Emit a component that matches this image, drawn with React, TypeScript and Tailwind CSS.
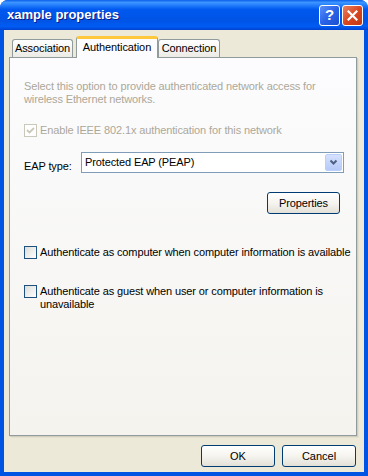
import React from 'react';

const font = "font-['Tahoma','Liberation_Sans',sans-serif]";

const Checkbox: React.FC<{ checked?: boolean; disabled?: boolean }> = ({ checked, disabled }) => (
  <div
    className={
      'w-[13px] h-[13px] shrink-0 flex items-center justify-center border ' +
      (disabled
        ? 'border-[#CAC8BB] bg-white'
        : 'border-[#1C5180] bg-gradient-to-br from-[#DCDCD7] to-white')
    }
  >
    {checked && (
      <svg width="9" height="9" viewBox="0 0 9 9">
        <path d="M1 4 L3.5 6.5 L8 2" fill="none" stroke={disabled ? '#CAC8BB' : '#21A121'} strokeWidth="1.8" />
      </svg>
    )}
  </div>
);

const XpButton: React.FC<{ label: string; className?: string }> = ({ label, className }) => (
  <button
    className={
      'h-[22px] rounded-[3px] border border-[#003C74] bg-gradient-to-b from-white via-[#F5F4EF] to-[#E3E1D7] text-[11px] text-black flex items-center justify-center ' +
      (className ?? '')
    }
  >
    {label}
  </button>
);

export default function App() {
  return (
    <div className={'w-[368px] h-[476px] flex flex-col bg-[#0054E3] rounded-t-[8px] overflow-hidden ' + font}>
      {/* title bar */}
      <div className="h-[30px] shrink-0 flex items-center pl-[7px] pr-[5px] bg-[linear-gradient(to_bottom,#0A5FEA_0%,#3D95FF_8%,#2C87FF_14%,#0058EE_32%,#0054E6_70%,#005CF4_88%,#0042CF_100%)]">
        <span className="flex-1 text-white font-bold text-[13px] font-['Trebuchet_MS','Liberation_Sans',sans-serif] [text-shadow:1px_1px_0_#0A1883]">
          xample properties
        </span>
        <div className="flex gap-[2px]">
          <div className="w-[21px] h-[21px] rounded-[3px] border border-white bg-gradient-to-br from-[#5A8FF8] via-[#2A63E8] to-[#1A4FD0] flex items-center justify-center text-white font-bold text-[15px] font-['Liberation_Sans',sans-serif]">
            ?
          </div>
          <div className="w-[21px] h-[21px] rounded-[3px] border border-white bg-gradient-to-br from-[#E9805F] via-[#D9461F] to-[#C03A15] flex items-center justify-center">
            <svg width="11" height="11" viewBox="0 0 11 11">
              <path d="M1.5 1.5 L9.5 9.5 M9.5 1.5 L1.5 9.5" stroke="white" strokeWidth="2.2" strokeLinecap="square" />
            </svg>
          </div>
        </div>
      </div>

      {/* body */}
      <div className="flex-1 mx-[4px] mb-[4px] bg-[#ECE9D8] flex flex-col pl-[5px] pr-[7px] pt-[6px]">
        {/* tabs */}
        <div className="flex items-end h-[21px] text-[11px] tracking-[-0.1px] text-black relative z-10">
          <div className="ml-[3px] w-[61px] h-[18px] rounded-t-[3px] border border-b-0 border-[#919B9C] bg-gradient-to-b from-white to-[#ECEBE6] flex items-center justify-center">
            Association
          </div>
          <div className="ml-[3px] w-[82px] h-[22px] -mb-px rounded-t-[3px] border border-b-0 border-[#919B9C] border-t-[3px] border-t-[#FFC83C] bg-[#FCFCFE] flex items-center justify-center pb-[2px]">
            Authentication
          </div>
          <div className="w-[62px] h-[18px] rounded-t-[3px] border border-b-0 border-[#919B9C] bg-gradient-to-b from-white to-[#ECEBE6] flex items-center justify-center">
            Connection
          </div>
        </div>

        {/* tab panel */}
        <div className="w-[348px] h-[379px] border border-[#919B9C] bg-gradient-to-b from-[#FCFCFE] to-[#F4F3EE] shadow-[1px_1px_0_#D0CEBF,2px_2px_0_#E3E0D0] pl-[14px] pr-[8px] pt-[22px] text-[11px] leading-[13px] tracking-[-0.12px]">
          <p className="text-[#ACA899]">
            Select this option to provide authenticated network access for
            <br />
            wireless Ethernet networks.
          </p>

          <div className="mt-[18px] flex items-center gap-[3px] text-[#ACA899]">
            <Checkbox checked disabled />
            <span>Enable IEEE 802.1x authentication for this network</span>
          </div>

          <div className="mt-[15px] flex items-center">
            <span className="w-[57px] pt-[8px] text-black">EAP type:</span>
            <div className="w-[263px] h-[21px] border border-[#7F9DB9] bg-white flex items-center pl-[3px] pr-px">
              <span className="flex-1 text-black">Protected EAP (PEAP)</span>
              <div className="w-[17px] h-[17px] rounded-[2px] border border-[#B9D1FA] bg-gradient-to-b from-[#D5E1FD] to-[#B6CAF8] flex items-center justify-center">
                <svg width="9" height="7" viewBox="0 0 9 7">
                  <path d="M1.5 1.5 L4.5 4.5 L7.5 1.5" fill="none" stroke="#4D6185" strokeWidth="2" />
                </svg>
              </div>
            </div>
          </div>

          <div className="mt-[19px] flex justify-end pr-[8px]">
            <XpButton label="Properties" className="w-[73px]" />
          </div>

          <div className="mt-[32px] flex items-center gap-[3px] text-black whitespace-nowrap">
            <Checkbox />
            <span>Authenticate as computer when computer information is available</span>
          </div>

          <div className="mt-[26px] flex items-start gap-[3px] text-black">
            <Checkbox />
            <span>
              Authenticate as guest when user or computer information is
              <br />
              unavailable
            </span>
          </div>
        </div>

        {/* footer buttons */}
        <div className="mt-[9px] flex justify-end gap-[7px] pr-px">
          <XpButton label="OK" className="w-[74px] h-[21px]" />
          <XpButton label="Cancel" className="w-[74px] h-[21px]" />
        </div>
      </div>
    </div>
  );
}
